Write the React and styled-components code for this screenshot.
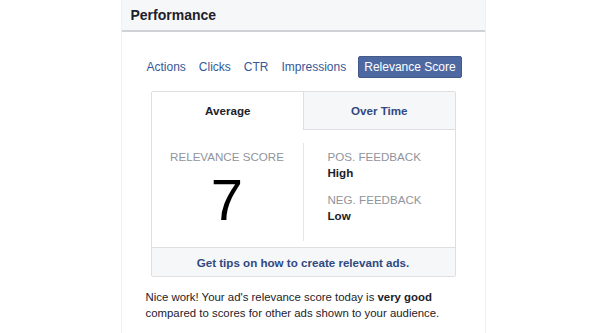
import React from 'react';
import styled, { createGlobalStyle } from 'styled-components';

const GlobalStyle = createGlobalStyle`
    body {
        margin: 0;
        background: #fff;
        font-family: "Liberation Sans", Arial, sans-serif;
        -webkit-font-smoothing: antialiased;
    }
`;

const Panel = styled.div`
    width: 365px;
    height: 333px;
    margin: 0 auto;
    border-left: 1px solid #f0f1f3;
    border-right: 1px solid #f0f1f3;
    box-sizing: border-box;
    overflow: hidden;
`;

const Header = styled.div`
    height: 30px;
    background: #f6f7f9;
    border-bottom: 2px solid #cfd2d6;
    padding-left: 9px;
    display: flex;
    align-items: center;
    font-size: 14px;
    font-weight: bold;
    color: #1d2129;
`;

const MetricNav = styled.div`
    display: flex;
    align-items: center;
    gap: 11px;
    margin: 24px 0 0 24px;
`;

const MetricLink = styled.span`
    font-size: 12px;
    line-height: 20px;
    white-space: nowrap;
    color: ${props => (props.active ? '#fff' : '#365899')};
    background: ${props => (props.active ? '#4e69a2' : 'transparent')};
    border: 1px solid ${props => (props.active ? '#435a8b' : 'transparent')};
    border-radius: 2px;
    padding: ${props => (props.active ? '0 5px' : '0')};
`;

const Card = styled.div`
    width: 305px;
    margin: 13px 0 0 29px;
    border: 1px solid #dddfe2;
    border-radius: 2px;
    box-sizing: border-box;
`;

const CardTabs = styled.div`
    display: flex;
    height: 38px;
`;

const CardTab = styled.div`
    flex: 1;
    display: flex;
    align-items: center;
    justify-content: center;
    font-size: 11.6px;
    font-weight: bold;
    color: ${props => (props.active ? '#1d2129' : '#30497f')};
    background: ${props => (props.active ? '#fff' : '#f6f7f9')};
    border-bottom: 1px solid ${props => (props.active ? 'transparent' : '#dddfe2')};
    border-left: 1px solid ${props => (props.active ? 'transparent' : '#dddfe2')};
`;

const CardBody = styled.div`
    display: flex;
    padding: 13px 0 6px;
`;

const ScoreCol = styled.div`
    width: 151px;
    border-right: 1px solid #e5e6e9;
    display: flex;
    flex-direction: column;
    align-items: center;
    padding-top: 6px;
    height: 92px;
`;

const Label = styled.div`
    font-size: 11.6px;
    color: #90949c;
    line-height: 16px;
`;

const Score = styled.div`
    font-size: 58px;
    line-height: 58px;
    color: #000;
    margin-top: 6px;
`;

const FeedbackCol = styled.div`
    padding: 6px 0 0 24px;
`;

const Value = styled.div`
    font-size: 11.6px;
    font-weight: bold;
    color: #1d2129;
    line-height: 16px;
    margin-bottom: ${props => (props.last ? '0' : '11px')};
`;

const CardFooter = styled.div`
    height: 28px;
    background: #f6f7f9;
    border-top: 1px solid #dddfe2;
    display: flex;
    align-items: center;
    justify-content: center;
    font-size: 11.6px;
    font-weight: bold;
    color: #30497f;
`;

const Summary = styled.p`
    margin: 12px 0 0 24px;
    font-size: 11.4px;
    line-height: 16px;
    color: #1d2129;
`;

const App = () => {
    const metrics = ['Actions', 'Clicks', 'CTR', 'Impressions', 'Relevance Score'];

    return (
        <Panel>
            <GlobalStyle />
            <Header>Performance</Header>
            <MetricNav>
                {metrics.map(m => (
                    <MetricLink key={m} active={m === 'Relevance Score'}>{m}</MetricLink>
                ))}
            </MetricNav>
            <Card>
                <CardTabs>
                    <CardTab active>Average</CardTab>
                    <CardTab>Over Time</CardTab>
                </CardTabs>
                <CardBody>
                    <ScoreCol>
                        <Label>RELEVANCE SCORE</Label>
                        <Score>7</Score>
                    </ScoreCol>
                    <FeedbackCol>
                        <Label>POS. FEEDBACK</Label>
                        <Value>High</Value>
                        <Label>NEG. FEEDBACK</Label>
                        <Value last>Low</Value>
                    </FeedbackCol>
                </CardBody>
                <CardFooter>Get tips on how to create relevant ads.</CardFooter>
            </Card>
            <Summary>
                Nice work! Your ad's relevance score today is <b>very good</b><br />
                compared to scores for other ads shown to your audience.
            </Summary>
        </Panel>
    );
};

export default App;
